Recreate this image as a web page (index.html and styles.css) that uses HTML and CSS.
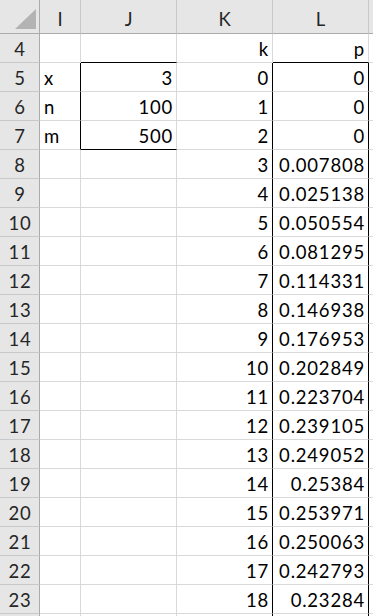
FILE: index.html
```html
<!DOCTYPE html>
<html>
<head>
<meta charset="utf-8">
<link rel="stylesheet" href="styles.css">
</head>
<body>
<div class="sheet">
  <div class="corner"><svg width="39" height="33" viewBox="0 0 39 33"><polygon points="15,29 36,9 36,29" fill="#b3b3b3"/></svg></div>
  <div class="ch">I</div><div class="ch">J</div><div class="ch">K</div><div class="ch">L</div><div class="ch last"></div>

  <div class="rh">4</div><div class="c"></div><div class="c bb"></div><div class="c r">k</div><div class="c r bb">p</div><div class="c"></div>
  <div class="rh">5</div><div class="c br">x</div><div class="c r">3</div><div class="c r br">0</div><div class="c r br">0</div><div class="c"></div>
  <div class="rh">6</div><div class="c br">n</div><div class="c r">100</div><div class="c r br">1</div><div class="c r br">0</div><div class="c"></div>
  <div class="rh">7</div><div class="c br">m</div><div class="c r bb">500</div><div class="c r br">2</div><div class="c r br">0</div><div class="c"></div>
  <div class="rh">8</div><div class="c"></div><div class="c"></div><div class="c r br">3</div><div class="c r br">0.007808</div><div class="c"></div>
  <div class="rh">9</div><div class="c"></div><div class="c"></div><div class="c r br">4</div><div class="c r br">0.025138</div><div class="c"></div>
  <div class="rh">10</div><div class="c"></div><div class="c"></div><div class="c r br">5</div><div class="c r br">0.050554</div><div class="c"></div>
  <div class="rh">11</div><div class="c"></div><div class="c"></div><div class="c r br">6</div><div class="c r br">0.081295</div><div class="c"></div>
  <div class="rh">12</div><div class="c"></div><div class="c"></div><div class="c r br">7</div><div class="c r br">0.114331</div><div class="c"></div>
  <div class="rh">13</div><div class="c"></div><div class="c"></div><div class="c r br">8</div><div class="c r br">0.146938</div><div class="c"></div>
  <div class="rh">14</div><div class="c"></div><div class="c"></div><div class="c r br">9</div><div class="c r br">0.176953</div><div class="c"></div>
  <div class="rh">15</div><div class="c"></div><div class="c"></div><div class="c r br">10</div><div class="c r br">0.202849</div><div class="c"></div>
  <div class="rh">16</div><div class="c"></div><div class="c"></div><div class="c r br">11</div><div class="c r br">0.223704</div><div class="c"></div>
  <div class="rh">17</div><div class="c"></div><div class="c"></div><div class="c r br">12</div><div class="c r br">0.239105</div><div class="c"></div>
  <div class="rh">18</div><div class="c"></div><div class="c"></div><div class="c r br">13</div><div class="c r br">0.249052</div><div class="c"></div>
  <div class="rh">19</div><div class="c"></div><div class="c"></div><div class="c r br">14</div><div class="c r br">0.25384</div><div class="c"></div>
  <div class="rh">20</div><div class="c"></div><div class="c"></div><div class="c r br">15</div><div class="c r br">0.253971</div><div class="c"></div>
  <div class="rh">21</div><div class="c"></div><div class="c"></div><div class="c r br">16</div><div class="c r br">0.250063</div><div class="c"></div>
  <div class="rh">22</div><div class="c"></div><div class="c"></div><div class="c r br">17</div><div class="c r br">0.242793</div><div class="c"></div>
  <div class="rh">23</div><div class="c"></div><div class="c"></div><div class="c r br">18</div><div class="c r br">0.23284</div><div class="c"></div>
  <div class="rh"></div><div class="c"></div><div class="c"></div><div class="c r br"></div><div class="c r br"></div><div class="c"></div>
</div>
</body>
</html>
```

FILE: styles.css
```css
html, body {
  margin: 0;
  padding: 0;
  background: #ffffff;
  overflow: hidden;
}
.sheet {
  display: grid;
  grid-template-columns: 40px 41px 96px 96px 96px 1fr;
  grid-template-rows: 34px;
  grid-auto-rows: 29px;
  width: 373px;
  font-family: Lato, "Open Sans", sans-serif;
  font-size: 18.5px;
  letter-spacing: 0.8px;
  color: #000000;
}
.sheet > div {
  box-sizing: border-box;
  line-height: 28px;
  white-space: nowrap;
  overflow: hidden;
}
.corner {
  background: #e6e6e6;
  border-right: 1px solid #ababab;
  border-bottom: 1px solid #ababab;
  line-height: 0 !important;
}
.corner svg {
  display: block;
}
.ch {
  background: #e6e6e6;
  border-right: 1px solid #c9c9c9;
  border-bottom: 1px solid #ababab;
  text-align: center;
  color: #262626;
  line-height: 34px !important;
  padding-top: 2px;
  padding-left: 1px;
}
.ch.last {
  border-right: none;
}
.rh {
  background: #e6e6e6;
  border-right: 1px solid #ababab;
  border-bottom: 1px solid #c9c9c9;
  text-align: center;
  color: #262626;
  padding-top: 1px;
  padding-left: 1px;
}
.c {
  border-right: 1px solid #d9d9d9;
  border-bottom: 1px solid #d9d9d9;
  padding: 1px 3px 0 4px;
}
.r {
  text-align: right;
}
.br {
  border-right-color: #000000;
}
.bb {
  border-bottom-color: #000000;
}
```
